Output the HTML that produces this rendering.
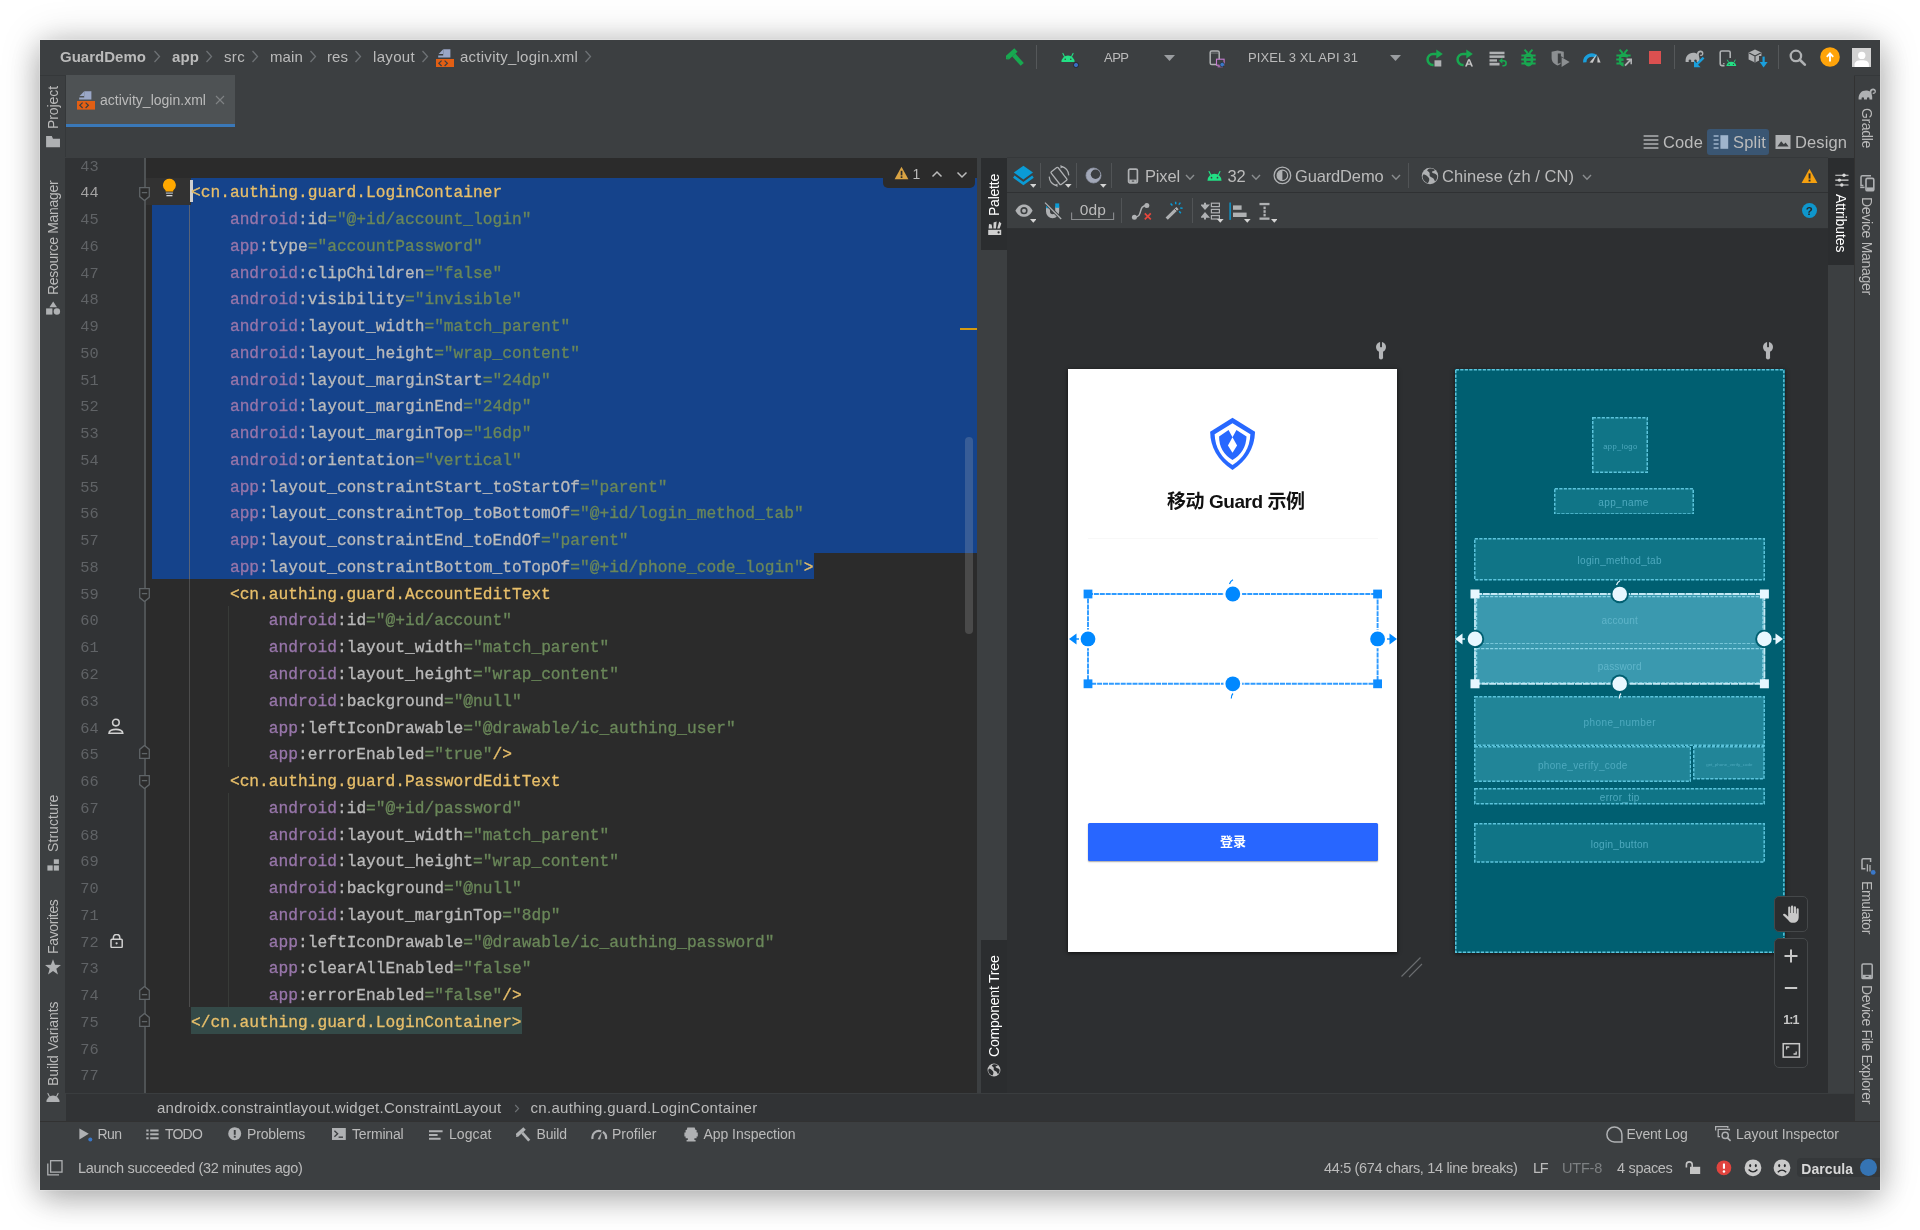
<!DOCTYPE html>
<html><head><meta charset="utf-8"><title>activity_login.xml</title>
<style>
html,body{margin:0;padding:0;}
body{width:1920px;height:1230px;position:relative;overflow:hidden;background:#ffffff;font-family:"Liberation Sans", "Noto Sans CJK SC", sans-serif;}
.r{position:absolute;display:block;}
.t{position:absolute;display:block;white-space:pre;font-family:"Liberation Sans", "Noto Sans CJK SC", sans-serif;}
.m{font-family:"Liberation Mono", "DejaVu Sans Mono", monospace;}
#all{position:absolute;left:0;top:0;width:1920px;height:1230px;will-change:transform;}
#win{position:absolute;left:40px;top:40px;width:1840px;height:1150px;background:#3c3f41;box-shadow:0 0 0 0.6px rgba(245,245,245,0.4),0 8px 30px rgba(0,0,0,0.27),0 0 38px rgba(0,0,0,0.17);}
.cl{-webkit-text-stroke:0.3px;position:absolute;left:0;white-space:pre;font-family:"Liberation Mono", "DejaVu Sans Mono", monospace;font-size:16.22px;height:27px;line-height:27px;color:#a9b7c6;}
.tg{color:#e8bf6a}.ns{color:#9876aa}.an{color:#bababa}.st{color:#6a8759}
.ln{position:absolute;left:66px;width:32.6px;text-align:right;font-family:"Liberation Mono", "DejaVu Sans Mono", monospace;font-size:15.3px;line-height:27px;height:27px;color:#606366;}
</style></head><body><div id="all">
<div id="win"></div>
<span id="t0" class="t" style="left:60.00px;top:46.40px;font-size:15.00px;line-height:21px;color:#bbbbbb;font-weight:700;letter-spacing:0.016px;">GuardDemo</span>
<span id="t1" class="t" style="left:172.00px;top:46.40px;font-size:15.00px;line-height:21px;color:#bbbbbb;font-weight:700;letter-spacing:0.109px;">app</span>
<span id="t2" class="t" style="left:224.00px;top:46.40px;font-size:15.00px;line-height:21px;color:#bbbbbb;letter-spacing:0.333px;">src</span>
<span id="t3" class="t" style="left:270.00px;top:46.40px;font-size:15.00px;line-height:21px;color:#bbbbbb;letter-spacing:0.121px;">main</span>
<span id="t4" class="t" style="left:327.00px;top:46.40px;font-size:15.00px;line-height:21px;color:#bbbbbb;letter-spacing:0.052px;">res</span>
<span id="t5" class="t" style="left:373.00px;top:46.40px;font-size:15.00px;line-height:21px;color:#bbbbbb;letter-spacing:0.328px;">layout</span>
<span id="t6" class="t" style="left:460.00px;top:46.40px;font-size:15.00px;line-height:21px;color:#bbbbbb;letter-spacing:0.257px;">activity_login.xml</span>
<svg class="r" style="left:153.00px;top:50.40px;" width="8" height="13" viewBox="0 0 8 13"><path d="M1.5 1 L6.5 6.5 L1.5 12" fill="none" stroke="#6e7275" stroke-width="1.3"/></svg>
<svg class="r" style="left:205.00px;top:50.40px;" width="8" height="13" viewBox="0 0 8 13"><path d="M1.5 1 L6.5 6.5 L1.5 12" fill="none" stroke="#6e7275" stroke-width="1.3"/></svg>
<svg class="r" style="left:251.00px;top:50.40px;" width="8" height="13" viewBox="0 0 8 13"><path d="M1.5 1 L6.5 6.5 L1.5 12" fill="none" stroke="#6e7275" stroke-width="1.3"/></svg>
<svg class="r" style="left:309.00px;top:50.40px;" width="8" height="13" viewBox="0 0 8 13"><path d="M1.5 1 L6.5 6.5 L1.5 12" fill="none" stroke="#6e7275" stroke-width="1.3"/></svg>
<svg class="r" style="left:354.00px;top:50.40px;" width="8" height="13" viewBox="0 0 8 13"><path d="M1.5 1 L6.5 6.5 L1.5 12" fill="none" stroke="#6e7275" stroke-width="1.3"/></svg>
<svg class="r" style="left:421.00px;top:50.40px;" width="8" height="13" viewBox="0 0 8 13"><path d="M1.5 1 L6.5 6.5 L1.5 12" fill="none" stroke="#6e7275" stroke-width="1.3"/></svg>
<svg class="r" style="left:584.00px;top:50.40px;" width="8" height="13" viewBox="0 0 8 13"><path d="M1.5 1 L6.5 6.5 L1.5 12" fill="none" stroke="#6e7275" stroke-width="1.3"/></svg>
<div class="r" style="left:65.60px;top:75.00px;width:169.60px;height:52.00px;background:#4e5254;"></div>
<div class="r" style="left:65.60px;top:124.20px;width:169.60px;height:2.60px;background:#3a78b8;"></div>
<span id="t7" class="t" style="left:100.00px;top:89.50px;font-size:14.00px;line-height:20px;color:#bbbbbb;letter-spacing:0.010px;">activity_login.xml</span>
<svg class="r" style="left:215.00px;top:94.50px;" width="10" height="10" viewBox="0 0 10 10"><path d="M1 1 L9 9 M9 1 L1 9" stroke="#7f8385" stroke-width="1.1" fill="none"/></svg>
<div class="r" style="left:40.00px;top:75.00px;width:26.00px;height:1046.00px;background:#3c3f41;"></div>
<div class="r" style="left:64.80px;top:75.00px;width:1.00px;height:82.00px;background:#35383a;"></div>
<div class="r" style="left:40.00px;top:74.60px;width:26.00px;height:1.00px;background:#35383a;"></div>
<span id="t8" class="t" style="font-size:14.00px;line-height:20px;color:#bbbbbb;letter-spacing:-0.083px;left:43.30px;top:129.00px;transform-origin:0 0;transform:rotate(-90deg);">Project</span>
<span id="t9" class="t" style="font-size:14.00px;line-height:20px;color:#bbbbbb;letter-spacing:-0.285px;left:43.30px;top:294.50px;transform-origin:0 0;transform:rotate(-90deg);">Resource Manager</span>
<span id="t10" class="t" style="font-size:14.00px;line-height:20px;color:#bbbbbb;letter-spacing:0.076px;left:43.30px;top:851.50px;transform-origin:0 0;transform:rotate(-90deg);">Structure</span>
<span id="t11" class="t" style="font-size:14.00px;line-height:20px;color:#bbbbbb;letter-spacing:-0.342px;left:43.30px;top:953.50px;transform-origin:0 0;transform:rotate(-90deg);">Favorites</span>
<span id="t12" class="t" style="font-size:14.00px;line-height:20px;color:#bbbbbb;letter-spacing:-0.060px;left:43.30px;top:1085.50px;transform-origin:0 0;transform:rotate(-90deg);">Build Variants</span>
<div class="r" style="left:1854.00px;top:75.00px;width:26.00px;height:1046.00px;background:#3c3f41;"></div>
<div class="r" style="left:1854.00px;top:75.00px;width:1.00px;height:1046.00px;background:#323232;"></div>
<div class="r" style="left:1854.00px;top:74.60px;width:26.00px;height:1.00px;background:#35383a;"></div>
<span id="t13" class="t" style="font-size:14.00px;line-height:20px;color:#bbbbbb;letter-spacing:-0.339px;left:1876.70px;top:108.00px;transform-origin:0 0;transform:rotate(90deg);">Gradle</span>
<span id="t14" class="t" style="font-size:14.00px;line-height:20px;color:#bbbbbb;letter-spacing:-0.281px;left:1876.70px;top:197.00px;transform-origin:0 0;transform:rotate(90deg);">Device Manager</span>
<span id="t15" class="t" style="font-size:14.00px;line-height:20px;color:#bbbbbb;letter-spacing:-0.379px;left:1876.70px;top:881.00px;transform-origin:0 0;transform:rotate(90deg);">Emulator</span>
<span id="t16" class="t" style="font-size:14.00px;line-height:20px;color:#bbbbbb;letter-spacing:-0.313px;left:1876.70px;top:985.00px;transform-origin:0 0;transform:rotate(90deg);">Device File Explorer</span>
<div class="r" style="left:1707.00px;top:128.50px;width:62.00px;height:26.50px;background:#3a5673;border-radius:3px;"></div>
<span id="t17" class="t" style="left:1663.00px;top:130.50px;font-size:16.50px;line-height:23px;color:#bbbbbb;letter-spacing:0.137px;">Code</span>
<span id="t18" class="t" style="left:1733.00px;top:130.50px;font-size:16.50px;line-height:23px;color:#bbbbbb;letter-spacing:0.178px;">Split</span>
<span id="t19" class="t" style="left:1795.00px;top:130.50px;font-size:16.50px;line-height:23px;color:#bbbbbb;letter-spacing:0.104px;">Design</span>
<div class="r" style="left:66.00px;top:157.50px;width:911.00px;height:935.50px;background:#2b2b2b;"></div>
<div class="r" style="left:65.20px;top:157.50px;width:80.80px;height:935.50px;background:#313335;"></div>
<div class="r" style="left:144.30px;top:157.50px;width:1.40px;height:935.50px;background:#4f5355;"></div>
<div class="r" style="left:0;top:157.50px;width:977px;height:935.50px;overflow:hidden;">
<div class="r" style="left:146.00px;top:20.30px;width:831.00px;height:26.76px;background:#323232;"></div>
<div class="r" style="left:191.00px;top:20.30px;width:786.00px;height:27.06px;background:#15438b;"></div>
<div class="r" style="left:152.00px;top:47.06px;width:825.00px;height:348.18px;background:#15438b;"></div>
<div class="r" style="left:152.00px;top:394.94px;width:662.00px;height:26.76px;background:#15438b;"></div>
<div class="r" style="left:191.00px;top:849.86px;width:331.00px;height:26.76px;background:#344a48;"></div>
<div class="r" style="left:189.00px;top:47.06px;width:1.20px;height:374.64px;background:#596377;"></div>
<div class="r" style="left:189.00px;top:421.70px;width:1.20px;height:428.16px;background:#4c4c4c;"></div>
<div class="r" style="left:227.80px;top:448.46px;width:1.10px;height:160.56px;background:#383b38;"></div>
<div class="r" style="left:227.80px;top:635.78px;width:1.10px;height:214.08px;background:#383b38;"></div>
<div class="r" style="left:190.40px;top:22.70px;width:2.40px;height:22.16px;background:#d0d0d0;"></div>
<div class="ln" style="top:-3.96px;left:66px;color:#606366">43</div>
<div class="ln" style="top:22.80px;left:66px;color:#a4a3a3">44</div>
<div class="cl" style="top:22.80px;left:191.00px"><span class="tg">&lt;cn.authing.guard.LoginContainer</span></div>
<div class="ln" style="top:49.56px;left:66px;color:#606366">45</div>
<div class="cl" style="top:49.56px;left:229.93px"><span class="ns">android</span><span class="an">:id</span><span class="st">=&quot;@+id/account_login&quot;</span></div>
<div class="ln" style="top:76.32px;left:66px;color:#606366">46</div>
<div class="cl" style="top:76.32px;left:229.93px"><span class="ns">app</span><span class="an">:type</span><span class="st">=&quot;accountPassword&quot;</span></div>
<div class="ln" style="top:103.08px;left:66px;color:#606366">47</div>
<div class="cl" style="top:103.08px;left:229.93px"><span class="ns">android</span><span class="an">:clipChildren</span><span class="st">=&quot;false&quot;</span></div>
<div class="ln" style="top:129.84px;left:66px;color:#606366">48</div>
<div class="cl" style="top:129.84px;left:229.93px"><span class="ns">android</span><span class="an">:visibility</span><span class="st">=&quot;invisible&quot;</span></div>
<div class="ln" style="top:156.60px;left:66px;color:#606366">49</div>
<div class="cl" style="top:156.60px;left:229.93px"><span class="ns">android</span><span class="an">:layout_width</span><span class="st">=&quot;match_parent&quot;</span></div>
<div class="ln" style="top:183.36px;left:66px;color:#606366">50</div>
<div class="cl" style="top:183.36px;left:229.93px"><span class="ns">android</span><span class="an">:layout_height</span><span class="st">=&quot;wrap_content&quot;</span></div>
<div class="ln" style="top:210.12px;left:66px;color:#606366">51</div>
<div class="cl" style="top:210.12px;left:229.93px"><span class="ns">android</span><span class="an">:layout_marginStart</span><span class="st">=&quot;24dp&quot;</span></div>
<div class="ln" style="top:236.88px;left:66px;color:#606366">52</div>
<div class="cl" style="top:236.88px;left:229.93px"><span class="ns">android</span><span class="an">:layout_marginEnd</span><span class="st">=&quot;24dp&quot;</span></div>
<div class="ln" style="top:263.64px;left:66px;color:#606366">53</div>
<div class="cl" style="top:263.64px;left:229.93px"><span class="ns">android</span><span class="an">:layout_marginTop</span><span class="st">=&quot;16dp&quot;</span></div>
<div class="ln" style="top:290.40px;left:66px;color:#606366">54</div>
<div class="cl" style="top:290.40px;left:229.93px"><span class="ns">android</span><span class="an">:orientation</span><span class="st">=&quot;vertical&quot;</span></div>
<div class="ln" style="top:317.16px;left:66px;color:#606366">55</div>
<div class="cl" style="top:317.16px;left:229.93px"><span class="ns">app</span><span class="an">:layout_constraintStart_toStartOf</span><span class="st">=&quot;parent&quot;</span></div>
<div class="ln" style="top:343.92px;left:66px;color:#606366">56</div>
<div class="cl" style="top:343.92px;left:229.93px"><span class="ns">app</span><span class="an">:layout_constraintTop_toBottomOf</span><span class="st">=&quot;@+id/login_method_tab&quot;</span></div>
<div class="ln" style="top:370.68px;left:66px;color:#606366">57</div>
<div class="cl" style="top:370.68px;left:229.93px"><span class="ns">app</span><span class="an">:layout_constraintEnd_toEndOf</span><span class="st">=&quot;parent&quot;</span></div>
<div class="ln" style="top:397.44px;left:66px;color:#606366">58</div>
<div class="cl" style="top:397.44px;left:229.93px"><span class="ns">app</span><span class="an">:layout_constraintBottom_toTopOf</span><span class="st">=&quot;@+id/phone_code_login&quot;</span><span class="tg">&gt;</span></div>
<div class="ln" style="top:424.20px;left:66px;color:#606366">59</div>
<div class="cl" style="top:424.20px;left:229.93px"><span class="tg">&lt;cn.authing.guard.AccountEditText</span></div>
<div class="ln" style="top:450.96px;left:66px;color:#606366">60</div>
<div class="cl" style="top:450.96px;left:268.87px"><span class="ns">android</span><span class="an">:id</span><span class="st">=&quot;@+id/account&quot;</span></div>
<div class="ln" style="top:477.72px;left:66px;color:#606366">61</div>
<div class="cl" style="top:477.72px;left:268.87px"><span class="ns">android</span><span class="an">:layout_width</span><span class="st">=&quot;match_parent&quot;</span></div>
<div class="ln" style="top:504.48px;left:66px;color:#606366">62</div>
<div class="cl" style="top:504.48px;left:268.87px"><span class="ns">android</span><span class="an">:layout_height</span><span class="st">=&quot;wrap_content&quot;</span></div>
<div class="ln" style="top:531.24px;left:66px;color:#606366">63</div>
<div class="cl" style="top:531.24px;left:268.87px"><span class="ns">android</span><span class="an">:background</span><span class="st">=&quot;@null&quot;</span></div>
<div class="ln" style="top:558.00px;left:66px;color:#606366">64</div>
<div class="cl" style="top:558.00px;left:268.87px"><span class="ns">app</span><span class="an">:leftIconDrawable</span><span class="st">=&quot;@drawable/ic_authing_user&quot;</span></div>
<div class="ln" style="top:584.76px;left:66px;color:#606366">65</div>
<div class="cl" style="top:584.76px;left:268.87px"><span class="ns">app</span><span class="an">:errorEnabled</span><span class="st">=&quot;true&quot;</span><span class="tg">/&gt;</span></div>
<div class="ln" style="top:611.52px;left:66px;color:#606366">66</div>
<div class="cl" style="top:611.52px;left:229.93px"><span class="tg">&lt;cn.authing.guard.PasswordEditText</span></div>
<div class="ln" style="top:638.28px;left:66px;color:#606366">67</div>
<div class="cl" style="top:638.28px;left:268.87px"><span class="ns">android</span><span class="an">:id</span><span class="st">=&quot;@+id/password&quot;</span></div>
<div class="ln" style="top:665.04px;left:66px;color:#606366">68</div>
<div class="cl" style="top:665.04px;left:268.87px"><span class="ns">android</span><span class="an">:layout_width</span><span class="st">=&quot;match_parent&quot;</span></div>
<div class="ln" style="top:691.80px;left:66px;color:#606366">69</div>
<div class="cl" style="top:691.80px;left:268.87px"><span class="ns">android</span><span class="an">:layout_height</span><span class="st">=&quot;wrap_content&quot;</span></div>
<div class="ln" style="top:718.56px;left:66px;color:#606366">70</div>
<div class="cl" style="top:718.56px;left:268.87px"><span class="ns">android</span><span class="an">:background</span><span class="st">=&quot;@null&quot;</span></div>
<div class="ln" style="top:745.32px;left:66px;color:#606366">71</div>
<div class="cl" style="top:745.32px;left:268.87px"><span class="ns">android</span><span class="an">:layout_marginTop</span><span class="st">=&quot;8dp&quot;</span></div>
<div class="ln" style="top:772.08px;left:66px;color:#606366">72</div>
<div class="cl" style="top:772.08px;left:268.87px"><span class="ns">app</span><span class="an">:leftIconDrawable</span><span class="st">=&quot;@drawable/ic_authing_password&quot;</span></div>
<div class="ln" style="top:798.84px;left:66px;color:#606366">73</div>
<div class="cl" style="top:798.84px;left:268.87px"><span class="ns">app</span><span class="an">:clearAllEnabled</span><span class="st">=&quot;false&quot;</span></div>
<div class="ln" style="top:825.60px;left:66px;color:#606366">74</div>
<div class="cl" style="top:825.60px;left:268.87px"><span class="ns">app</span><span class="an">:errorEnabled</span><span class="st">=&quot;false&quot;</span><span class="tg">/&gt;</span></div>
<div class="ln" style="top:852.36px;left:66px;color:#606366">75</div>
<div class="cl" style="top:852.36px;left:191.00px"><span class="tg">&lt;/cn.authing.guard.LoginContainer&gt;</span></div>
<div class="ln" style="top:879.12px;left:66px;color:#606366">76</div>
<div class="ln" style="top:905.88px;left:66px;color:#606366">77</div>
</div>
<div class="r" style="left:883.00px;top:157.50px;width:91.50px;height:30.00px;background:#2b2b2b;border-radius:0 0 5px 5px;"></div>
<svg class="r" style="left:894.00px;top:166.00px;" width="15" height="14" viewBox="0 0 15 14"><path d="M7.5 0.8 L14.4 13.2 L0.6 13.2 Z" fill="#d9a343"/><rect x="6.7" y="4.8" width="1.7" height="4.6" fill="#2b2b2b"/><rect x="6.7" y="10.3" width="1.7" height="1.7" fill="#2b2b2b"/></svg>
<span id="t20" class="t" style="left:912.50px;top:164.20px;font-size:14.00px;line-height:20px;color:#bbbbbb;">1</span>
<svg class="r" style="left:931.00px;top:169.50px;" width="12" height="8" viewBox="0 0 12 8"><path d="M1.5 6.5 L6 2 L10.5 6.5" fill="none" stroke="#bbbbbb" stroke-width="1.5"/></svg>
<svg class="r" style="left:956.00px;top:170.50px;" width="12" height="8" viewBox="0 0 12 8"><path d="M1.5 1.5 L6 6 L10.5 1.5" fill="none" stroke="#bbbbbb" stroke-width="1.5"/></svg>
<div class="r" style="left:964.90px;top:437.40px;width:8.20px;height:196.80px;background:rgba(200,200,200,0.2);border-radius:4.1px;"></div>
<div class="r" style="left:960.00px;top:328.30px;width:17.00px;height:2.00px;background:#d39a13;"></div>
<div class="r" style="left:977.00px;top:157.50px;width:4.00px;height:935.50px;background:#3c3f41;"></div>
<div class="r" style="left:981.00px;top:157.50px;width:25.50px;height:935.50px;background:#3c3f41;"></div>
<div class="r" style="left:981.00px;top:157.50px;width:25.50px;height:92.00px;background:#2b2d2f;"></div>
<div class="r" style="left:981.00px;top:940.00px;width:25.50px;height:153.00px;background:#2b2d2f;"></div>
<span id="t21" class="t" style="font-size:14.00px;line-height:20px;color:#ffffff;letter-spacing:-0.228px;left:984.30px;top:215.50px;transform-origin:0 0;transform:rotate(-90deg);">Palette</span>
<span id="t22" class="t" style="font-size:14.00px;line-height:20px;color:#ffffff;letter-spacing:-0.200px;left:984.30px;top:1056.50px;transform-origin:0 0;transform:rotate(-90deg);">Component Tree</span>
<div class="r" style="left:1006.50px;top:157.50px;width:821.50px;height:35.00px;background:#3c3f41;"></div>
<div class="r" style="left:1006.50px;top:192.00px;width:821.50px;height:1.30px;background:#2f3133;"></div>
<div class="r" style="left:1006.50px;top:157.00px;width:821.50px;height:1.00px;background:#35383a;"></div>
<div class="r" style="left:1006.50px;top:193.30px;width:821.50px;height:35.00px;background:#3c3f41;"></div>
<div class="r" style="left:1006.50px;top:228.00px;width:821.50px;height:1.00px;background:#2f3133;"></div>
<span id="t23" class="t" style="left:1145.00px;top:164.50px;font-size:16.50px;line-height:23px;color:#bbbbbb;letter-spacing:-0.153px;">Pixel</span>
<span id="t24" class="t" style="left:1227.50px;top:164.50px;font-size:16.50px;line-height:23px;color:#bbbbbb;letter-spacing:-0.180px;">32</span>
<span id="t25" class="t" style="left:1295.00px;top:164.50px;font-size:16.50px;line-height:23px;color:#bbbbbb;letter-spacing:-0.153px;">GuardDemo</span>
<span id="t26" class="t" style="left:1442.00px;top:164.50px;font-size:16.50px;line-height:23px;color:#bbbbbb;letter-spacing:0.051px;">Chinese (zh / CN)</span>
<svg class="r" style="left:1185.00px;top:173.50px;" width="10" height="7" viewBox="0 0 10 7"><path d="M1 1 L5 5.3 L9 1" fill="none" stroke="#8a8d8f" stroke-width="1.4"/></svg>
<svg class="r" style="left:1251.00px;top:173.50px;" width="10" height="7" viewBox="0 0 10 7"><path d="M1 1 L5 5.3 L9 1" fill="none" stroke="#8a8d8f" stroke-width="1.4"/></svg>
<svg class="r" style="left:1391.00px;top:173.50px;" width="10" height="7" viewBox="0 0 10 7"><path d="M1 1 L5 5.3 L9 1" fill="none" stroke="#8a8d8f" stroke-width="1.4"/></svg>
<svg class="r" style="left:1581.50px;top:173.50px;" width="10" height="7" viewBox="0 0 10 7"><path d="M1 1 L5 5.3 L9 1" fill="none" stroke="#8a8d8f" stroke-width="1.4"/></svg>
<div class="r" style="left:1040.30px;top:163.00px;width:1.00px;height:25.00px;background:#515456;"></div>
<div class="r" style="left:1075.50px;top:163.00px;width:1.00px;height:25.00px;background:#515456;"></div>
<div class="r" style="left:1111.20px;top:163.00px;width:1.00px;height:25.00px;background:#515456;"></div>
<div class="r" style="left:1407.80px;top:163.00px;width:1.00px;height:25.00px;background:#515456;"></div>
<span id="t27" class="t" style="left:1079.70px;top:198.70px;font-size:15.50px;line-height:22px;color:#bbbbbb;letter-spacing:0.208px;">0dp</span>
<svg class="r" style="left:1071.00px;top:212.00px;" width="44" height="9" viewBox="0 0 44 9"><path d="M0.6 0.5 V7.5 H42.6 V0.5" fill="none" stroke="#8a8d8f" stroke-width="1.1"/></svg>
<div class="r" style="left:1120.80px;top:198.00px;width:1.00px;height:25.00px;background:#515456;"></div>
<div class="r" style="left:1192.30px;top:198.00px;width:1.00px;height:25.00px;background:#515456;"></div>
<div class="r" style="left:1006.50px;top:229.00px;width:821.50px;height:864.00px;background:#2d2f31;"></div>
<div class="r" style="left:1828.00px;top:157.50px;width:26.00px;height:935.50px;background:#3c3f41;"></div>
<div class="r" style="left:1828.00px;top:157.50px;width:26.00px;height:107.50px;background:#2b2d2f;"></div>
<span id="t28" class="t" style="font-size:14.00px;line-height:20px;color:#ffffff;letter-spacing:-0.064px;left:1851.00px;top:194.00px;transform-origin:0 0;transform:rotate(90deg);">Attributes</span>
<div class="r" style="left:1068.00px;top:368.50px;width:329.00px;height:583.50px;background:#ffffff;box-shadow:0 1px 4px rgba(0,0,0,0.7);"></div>
<span id="t29" class="t" style="left:1167.00px;top:488.10px;font-size:19.00px;line-height:27px;color:#111111;font-weight:700;letter-spacing:-0.456px;">移动 Guard 示例</span>
<div class="r" style="left:1088.00px;top:538.30px;width:290.00px;height:1.00px;background:#f8f8f8;"></div>
<div class="r" style="left:1087.50px;top:823.00px;width:290.00px;height:38.30px;background:#2866ff;border-radius:1.5px;box-shadow:0 1px 1.5px rgba(0,0,0,0.35);"></div>
<span id="t30" class="t" style="left:1220.00px;top:833.00px;font-size:13.00px;line-height:18px;color:#ffffff;font-weight:700;letter-spacing:-0.008px;">登录</span>
<div class="r" style="left:1455.00px;top:368.50px;width:329.60px;height:584.10px;background:#005f71;box-shadow:0 1px 4px rgba(0,0,0,0.6);"></div>
<svg class="r" style="left:1455.00px;top:368.50px;" width="329.6" height="584.1" viewBox="0 0 329.6 584.1"><rect x="0.75" y="0.75" width="328.1" height="582.6" fill="none" stroke="#5cc4dc" stroke-width="1.5" stroke-dasharray="3.2 1.3"/></svg>
<svg class="r" style="left:1592.40px;top:417.00px;" width="56" height="56" viewBox="0 0 56 56"><rect x="0.75" y="0.75" width="54.5" height="54.5" fill="#107587" stroke="#5cc4dc" stroke-width="1.5" stroke-dasharray="3.2 1.3"/></svg>
<span id="t31" class="t" style="left:1603.15px;top:440.70px;font-size:7.60px;line-height:12px;color:#4eaabf;letter-spacing:0.404px;">app_logo</span>
<svg class="r" style="left:1553.50px;top:487.60px;" width="140" height="26.8" viewBox="0 0 140 26.8"><rect x="0.75" y="0.75" width="138.5" height="25.3" fill="#107587" stroke="#5cc4dc" stroke-width="1.5" stroke-dasharray="3.2 1.3"/></svg>
<span id="t32" class="t" style="left:1598.20px;top:496.70px;font-size:10.00px;line-height:12px;color:#4eaabf;letter-spacing:0.417px;">app_name</span>
<svg class="r" style="left:1474.20px;top:538.20px;" width="291" height="42.6" viewBox="0 0 291 42.6"><rect x="0.75" y="0.75" width="289.5" height="41.1" fill="#107587" stroke="#5cc4dc" stroke-width="1.5" stroke-dasharray="3.2 1.3"/></svg>
<span id="t33" class="t" style="left:1577.55px;top:555.20px;font-size:10.00px;line-height:12px;color:#4eaabf;letter-spacing:0.299px;">login_method_tab</span>
<div class="r" style="left:1474.20px;top:594.00px;width:291.00px;height:89.80px;background:#3a99af;"></div>
<svg class="r" style="left:1476.00px;top:595.50px;" width="287.5" height="48.5" viewBox="0 0 287.5 48.5"><rect x="0.6" y="0.6" width="286.3" height="47.3" fill="#3a99af" stroke="#8ad4e6" stroke-width="1.2" stroke-dasharray="3.2 1.3"/></svg>
<span id="t34" class="t" style="left:1601.45px;top:615.45px;font-size:10.00px;line-height:12px;color:#5fb5ca;letter-spacing:0.224px;">account</span>
<svg class="r" style="left:1476.00px;top:647.60px;" width="287.5" height="35.4" viewBox="0 0 287.5 35.4"><rect x="0.6" y="0.6" width="286.3" height="34.2" fill="#3a99af" stroke="#8ad4e6" stroke-width="1.2" stroke-dasharray="3.2 1.3"/></svg>
<span id="t35" class="t" style="left:1597.80px;top:661.00px;font-size:10.00px;line-height:12px;color:#5fb5ca;letter-spacing:0.136px;">password</span>
<svg class="r" style="left:1474.20px;top:696.00px;" width="291" height="50" viewBox="0 0 291 50"><rect x="0.75" y="0.75" width="289.5" height="48.5" fill="#218598" stroke="#5cc4dc" stroke-width="1.5" stroke-dasharray="3.2 1.3"/></svg>
<span id="t36" class="t" style="left:1583.40px;top:716.70px;font-size:10.00px;line-height:12px;color:#4eaabf;letter-spacing:0.443px;">phone_number</span>
<svg class="r" style="left:1474.20px;top:746.00px;" width="217.3" height="36" viewBox="0 0 217.3 36"><rect x="0.75" y="0.75" width="215.8" height="34.5" fill="#218598" stroke="#5cc4dc" stroke-width="1.5" stroke-dasharray="3.2 1.3"/></svg>
<span id="t37" class="t" style="left:1537.95px;top:759.70px;font-size:10.00px;line-height:12px;color:#4eaabf;letter-spacing:0.311px;">phone_verify_code</span>
<svg class="r" style="left:1693.40px;top:746.00px;" width="71.8" height="33.6" viewBox="0 0 71.8 33.6"><rect x="0.75" y="0.75" width="70.3" height="32.1" fill="#218598" stroke="#5cc4dc" stroke-width="1.5" stroke-dasharray="3.2 1.3"/></svg>
<span id="t38" class="t" style="left:1706.20px;top:758.50px;font-size:4.40px;line-height:12px;color:#4eaabf;letter-spacing:0.026px;">get_phone_verify_code</span>
<svg class="r" style="left:1474.20px;top:788.20px;" width="291" height="16.6" viewBox="0 0 291 16.6"><rect x="0.75" y="0.75" width="289.5" height="15.1" fill="#107587" stroke="#5cc4dc" stroke-width="1.5" stroke-dasharray="3.2 1.3"/></svg>
<span id="t39" class="t" style="left:1599.80px;top:792.20px;font-size:10.00px;line-height:12px;color:#4eaabf;letter-spacing:0.283px;">error_tip</span>
<svg class="r" style="left:1474.20px;top:823.30px;" width="291" height="39.7" viewBox="0 0 291 39.7"><rect x="0.75" y="0.75" width="289.5" height="38.2" fill="#107587" stroke="#5cc4dc" stroke-width="1.5" stroke-dasharray="3.2 1.3"/></svg>
<span id="t40" class="t" style="left:1590.75px;top:838.85px;font-size:10.00px;line-height:12px;color:#4eaabf;letter-spacing:0.283px;">login_button</span>
<svg class="r" style="left:1074.00px;top:580.00px;" width="317.6" height="117.8" viewBox="0 0 317.6 117.8"><rect x="14" y="14" width="289.6" height="89.8" fill="none" stroke="#2f9bff" stroke-width="1.9" stroke-dasharray="5 0.9"/><rect x="9.6" y="9.6" width="8.8" height="8.8" fill="#0d8cff"/><rect x="299.2" y="9.6" width="8.8" height="8.8" fill="#0d8cff"/><rect x="9.6" y="99.4" width="8.8" height="8.8" fill="#0d8cff"/><rect x="299.2" y="99.4" width="8.8" height="8.8" fill="#0d8cff"/><circle cx="158.8" cy="14" r="9.4" fill="#ffffff"/><circle cx="158.8" cy="14" r="7.4" fill="#0088ff"/><circle cx="158.8" cy="103.8" r="9.4" fill="#ffffff"/><circle cx="158.8" cy="103.8" r="7.4" fill="#0088ff"/><circle cx="14" cy="58.9" r="9.4" fill="#ffffff"/><circle cx="14" cy="58.9" r="7.4" fill="#0088ff"/><circle cx="303.6" cy="58.9" r="9.4" fill="#ffffff"/><circle cx="303.6" cy="58.9" r="7.4" fill="#0088ff"/></svg>
<svg class="r" style="left:1066.50px;top:632.00px;" width="12" height="14" viewBox="0 0 12 14"><path d="M9.5 1.5 L2 7 L9.5 12.5 Z" fill="#0088ff"/><rect x="9" y="6.3" width="3" height="1.4" fill="#0088ff"/></svg>
<svg class="r" style="left:1387.30px;top:632.00px;" width="12" height="14" viewBox="0 0 12 14"><path d="M2.5 1.5 L10 7 L2.5 12.5 Z" fill="#0088ff"/><rect x="0" y="6.3" width="3" height="1.4" fill="#0088ff"/></svg>
<svg class="r" style="left:1228.00px;top:579.00px;" width="8" height="6" viewBox="0 0 8 6"><path d="M1.5 5 Q2.5 2 5 0.8" fill="none" stroke="#0088ff" stroke-width="1.2"/></svg>
<svg class="r" style="left:1228.00px;top:692.50px;" width="8" height="6" viewBox="0 0 8 6"><path d="M5 0.5 Q3 2.5 3.3 5.5" fill="none" stroke="#0088ff" stroke-width="1.2"/></svg>
<svg class="r" style="left:1461.00px;top:580.00px;" width="317.4" height="117.8" viewBox="0 0 317.4 117.8"><rect x="14" y="14" width="289.4" height="89.8" fill="none" stroke="#c4e9f5" stroke-width="1.8" stroke-dasharray="7 0.8"/><rect x="9.5" y="9.5" width="9" height="9" fill="#e8f7ff"/><rect x="298.9" y="9.5" width="9" height="9" fill="#e8f7ff"/><rect x="9.5" y="99.3" width="9" height="9" fill="#e8f7ff"/><rect x="298.9" y="99.3" width="9" height="9" fill="#e8f7ff"/><circle cx="158.7" cy="14" r="9.2" fill="#005f71"/><circle cx="158.7" cy="14" r="7.3" fill="#e8f7ff"/><circle cx="158.7" cy="103.8" r="9.2" fill="#005f71"/><circle cx="158.7" cy="103.8" r="7.3" fill="#e8f7ff"/><circle cx="14" cy="58.9" r="9.2" fill="#005f71"/><circle cx="14" cy="58.9" r="7.3" fill="#e8f7ff"/><circle cx="303.4" cy="58.9" r="9.2" fill="#005f71"/><circle cx="303.4" cy="58.9" r="7.3" fill="#e8f7ff"/></svg>
<svg class="r" style="left:1453.30px;top:632.00px;" width="12" height="14" viewBox="0 0 12 14"><path d="M9.5 1.5 L2 7 L9.5 12.5 Z" fill="#e8f7ff"/><rect x="9" y="6.3" width="3" height="1.4" fill="#e8f7ff"/></svg>
<svg class="r" style="left:1772.50px;top:632.00px;" width="12" height="14" viewBox="0 0 12 14"><path d="M2.5 1.5 L10 7 L2.5 12.5 Z" fill="#e8f7ff"/><rect x="0" y="6.3" width="3" height="1.4" fill="#e8f7ff"/></svg>
<svg class="r" style="left:1615.00px;top:580.00px;" width="8" height="6" viewBox="0 0 8 6"><path d="M1.5 5 Q2.5 2 5 0.8" fill="none" stroke="#e8f7ff" stroke-width="1.2"/></svg>
<svg class="r" style="left:1616.00px;top:693.00px;" width="8" height="6" viewBox="0 0 8 6"><path d="M5 0.5 Q3 2.5 3.3 5.5" fill="none" stroke="#e8f7ff" stroke-width="1.2"/></svg>
<svg class="r" style="left:1374.85px;top:341.60px;" width="12" height="18.5" viewBox="0 0 12 18.5"><circle cx="6" cy="5.1" r="5" fill="#b4b6b8"/><rect x="3.95" y="5" width="4.1" height="10.4" fill="#b4b6b8"/><circle cx="6" cy="15.4" r="2.05" fill="#b4b6b8"/><rect x="5.1" y="-1" width="1.85" height="6.2" fill="#2d2f31"/></svg>
<svg class="r" style="left:1762.00px;top:341.60px;" width="12" height="18.5" viewBox="0 0 12 18.5"><circle cx="6" cy="5.1" r="5" fill="#b4b6b8"/><rect x="3.95" y="5" width="4.1" height="10.4" fill="#b4b6b8"/><circle cx="6" cy="15.4" r="2.05" fill="#b4b6b8"/><rect x="5.1" y="-1" width="1.85" height="6.2" fill="#2d2f31"/></svg>
<svg class="r" style="left:1400.00px;top:955.00px;" width="24" height="24" viewBox="0 0 24 24"><path d="M1.5 21.5 L20.5 2.5 M9 22 L22 9" stroke="#6b6e70" stroke-width="1.1" fill="none"/></svg>
<div class="r" style="left:1774.30px;top:896.30px;width:33.40px;height:36.20px;background:#2b2d2f;box-sizing:border-box;border:1px solid #45484a;border-radius:5px;"></div>
<div class="r" style="left:1774.30px;top:938.30px;width:33.40px;height:130.20px;background:#2b2d2f;box-sizing:border-box;border:1px solid #45484a;border-radius:5px;"></div>
<svg class="r" style="left:1782.00px;top:947.00px;" width="18" height="18" viewBox="0 0 18 18"><path d="M9 2.5 V15.5 M2.5 9 H15.5" stroke="#c8c8c8" stroke-width="2" fill="none"/></svg>
<svg class="r" style="left:1782.00px;top:978.50px;" width="18" height="18" viewBox="0 0 18 18"><path d="M2.8 9 H15.2" stroke="#c8c8c8" stroke-width="2" fill="none"/></svg>
<span id="t41" class="t" style="left:1783.20px;top:1010.50px;font-size:12.50px;line-height:18px;color:#c8c8c8;font-weight:700;letter-spacing:-0.859px;">1:1</span>
<svg class="r" style="left:1781.50px;top:1042.00px;" width="19" height="17" viewBox="0 0 19 17"><rect x="1.2" y="1.7" width="16.2" height="13.4" fill="none" stroke="#c8c8c8" stroke-width="1.5"/><path d="M4.6 7.5 V5 H7.3 M11.5 12 H14.2 V9.5" fill="none" stroke="#c8c8c8" stroke-width="1.3"/></svg>
<svg class="r" style="left:1781.00px;top:904.00px;" width="20" height="20" viewBox="0 0 20 20"><path d="M7.2 10.2 V3.6 a1.1 1.1 0 0 1 2.2 0 V9 h0.6 V2.6 a1.1 1.1 0 0 1 2.2 0 V9 h0.6 V3.4 a1.1 1.1 0 0 1 2.2 0 V9.6 h0.6 V5.4 a1.05 1.05 0 0 1 2.1 0 V13 c0 3.6 -2.2 5.8 -5.4 5.8 c-2.6 0 -3.9 -1 -5.2 -2.9 L2.2 11.2 c-0.5 -0.8 0.3 -1.8 1.3 -1.4 c1.2 0.5 2.3 1.5 3.7 2.9 Z" fill="#c8c8c8"/></svg>
<div class="r" style="left:66.00px;top:1093.00px;width:1788.00px;height:28.00px;background:#313335;"></div>
<div class="r" style="left:66.00px;top:1093.00px;width:1788.00px;height:0.80px;background:#3a3d3f;"></div>
<span id="t42" class="t" style="left:157.00px;top:1096.90px;font-size:15.00px;line-height:21px;color:#bbbbbb;letter-spacing:0.258px;">androidx.constraintlayout.widget.ConstraintLayout</span>
<span id="t43" class="t" style="left:530.50px;top:1096.90px;font-size:15.00px;line-height:21px;color:#bbbbbb;letter-spacing:0.301px;">cn.authing.guard.LoginContainer</span>
<svg class="r" style="left:514.00px;top:1103.50px;" width="6" height="9" viewBox="0 0 6 9"><path d="M1.2 1 L4.6 4.5 L1.2 8" fill="none" stroke="#6e7275" stroke-width="1.1"/></svg>
<div class="r" style="left:40.00px;top:1121.00px;width:1840.00px;height:27.50px;background:#3c3f41;"></div>
<div class="r" style="left:40.00px;top:1120.50px;width:1840.00px;height:1.00px;background:#323232;"></div>
<span id="t44" class="t" style="left:97.50px;top:1124.00px;font-size:14.00px;line-height:20px;color:#bbbbbb;letter-spacing:-0.562px;">Run</span>
<span id="t45" class="t" style="left:165.00px;top:1124.00px;font-size:14.00px;line-height:20px;color:#bbbbbb;letter-spacing:-0.801px;">TODO</span>
<span id="t46" class="t" style="left:247.00px;top:1124.00px;font-size:14.00px;line-height:20px;color:#bbbbbb;letter-spacing:-0.143px;">Problems</span>
<span id="t47" class="t" style="left:352.00px;top:1124.00px;font-size:14.00px;line-height:20px;color:#bbbbbb;letter-spacing:-0.176px;">Terminal</span>
<span id="t48" class="t" style="left:449.00px;top:1124.00px;font-size:14.00px;line-height:20px;color:#bbbbbb;letter-spacing:0.076px;">Logcat</span>
<span id="t49" class="t" style="left:536.50px;top:1124.00px;font-size:14.00px;line-height:20px;color:#bbbbbb;letter-spacing:-0.128px;">Build</span>
<span id="t50" class="t" style="left:612.00px;top:1124.00px;font-size:14.00px;line-height:20px;color:#bbbbbb;letter-spacing:0.018px;">Profiler</span>
<span id="t51" class="t" style="left:703.50px;top:1124.00px;font-size:14.00px;line-height:20px;color:#bbbbbb;letter-spacing:-0.045px;">App Inspection</span>
<span id="t52" class="t" style="left:1626.50px;top:1124.00px;font-size:14.00px;line-height:20px;color:#bbbbbb;letter-spacing:-0.229px;">Event Log</span>
<span id="t53" class="t" style="left:1736.00px;top:1124.00px;font-size:14.00px;line-height:20px;color:#bbbbbb;letter-spacing:-0.032px;">Layout Inspector</span>
<span id="t54" class="t" style="left:78.00px;top:1157.70px;font-size:14.50px;line-height:20px;color:#bbbbbb;letter-spacing:-0.305px;">Launch succeeded (32 minutes ago)</span>
<span id="t55" class="t" style="left:1324.00px;top:1157.70px;font-size:14.50px;line-height:20px;color:#bbbbbb;letter-spacing:-0.326px;">44:5 (674 chars, 14 line breaks)</span>
<span id="t56" class="t" style="left:1533.00px;top:1157.70px;font-size:14.50px;line-height:20px;color:#bbbbbb;letter-spacing:-1.211px;">LF</span>
<span id="t57" class="t" style="left:1562.00px;top:1157.70px;font-size:14.50px;line-height:20px;color:#7d8082;letter-spacing:-0.219px;">UTF-8</span>
<span id="t58" class="t" style="left:1617.00px;top:1157.70px;font-size:14.50px;line-height:20px;color:#bbbbbb;letter-spacing:-0.318px;">4 spaces</span>
<div class="r" style="left:1797.20px;top:1158.00px;width:82.60px;height:19.30px;background:#35383a;border-radius:4px 0 0 4px;"></div>
<span id="t59" class="t" style="left:1801.20px;top:1158.60px;font-size:14.00px;line-height:20px;color:#d8d8d8;font-weight:700;letter-spacing:0.092px;">Darcula</span>
<div class="r" style="left:1860.3px;top:1159.3px;width:16.8px;height:16.8px;border-radius:50%;background:#3574b4;"></div>
<svg class="r" style="left:1006.00px;top:47.20px;" width="21" height="20" viewBox="0 0 21 20"><g transform="rotate(-42 10 10)"><rect x="3" y="2.4" width="11.6" height="4.8" fill="#18a850"/><path d="M3 2.4 L0.8 4.8 L3 7.2 Z" fill="#18a850"/><rect x="7.6" y="7" width="4.2" height="12.6" fill="#18a850"/></g></svg>
<div class="r" style="left:1035.50px;top:45.00px;width:1.00px;height:24.00px;background:#55585a;"></div>
<svg class="r" style="left:1061.00px;top:52.00px;" width="14" height="10.36" viewBox="0 0 14 10.4"><path d="M0.4 10 A6.6 6.4 0 0 1 13.6 10 Z" fill="#22e084"/><path d="M3.4 4.4 L1.9 1.4 M10.6 4.4 L12.1 1.4" stroke="#22e084" stroke-width="1.1" stroke-linecap="round"/><circle cx="4.2" cy="7.2" r="0.8" fill="#3c3f41"/><circle cx="9.8" cy="7.2" r="0.8" fill="#3c3f41"/></svg>
<div class="r" style="left:1073.2px;top:62px;width:5.6px;height:5.6px;border-radius:50%;background:#3a6fc4;border:1px solid #26282a;box-sizing:border-box;"></div>
<span id="t60" class="t" style="left:1104.00px;top:48.60px;font-size:13.00px;line-height:18px;color:#bbbbbb;letter-spacing:-0.505px;">APP</span>
<svg class="r" style="left:1163.80px;top:55.00px;" width="11" height="6" viewBox="0 0 11 6"><path d="M0 0 H11 L5.5 6 Z" fill="#9a9da0"/></svg>
<svg class="r" style="left:1208.50px;top:49.50px;" width="17" height="18.5" viewBox="0 0 17 18.5"><rect x="1.2" y="0.9" width="9" height="13.6" rx="1.6" fill="none" stroke="#afb1b3" stroke-width="1.5"/><rect x="1.9" y="2.6" width="7.6" height="0.9" fill="#afb1b3" opacity="0.6"/><rect x="7.5" y="9.2" width="7.6" height="6" fill="#3c3f41" stroke="#c77dd1" stroke-width="1.1"/><rect x="8.6" y="16.3" width="5.4" height="1" fill="#c77dd1"/><circle cx="13.2" cy="14.6" r="2.3" fill="#3a78c9" stroke="#26282a" stroke-width="0.7"/></svg>
<span id="t61" class="t" style="left:1248.00px;top:48.60px;font-size:13.00px;line-height:18px;color:#bbbbbb;letter-spacing:0.108px;">PIXEL 3 XL API 31</span>
<svg class="r" style="left:1390.00px;top:55.00px;" width="11" height="6" viewBox="0 0 11 6"><path d="M0 0 H11 L5.5 6 Z" fill="#9a9da0"/></svg>
<svg class="r" style="left:1424.50px;top:48.50px;" width="19" height="18.5" viewBox="0 0 19 18.5"><path d="M11.8 5.1 H8 A5.45 5.45 0 0 0 8 16 H8.6" fill="none" stroke="#18a850" stroke-width="2.5"/><path d="M11.3 0.5 L17.8 4.95 L11.3 9.4 Z" fill="#18a850"/><rect x="9.5" y="11.3" width="6.8" height="6.2" fill="#afb1b3"/></svg>
<svg class="r" style="left:1454.60px;top:48.50px;" width="19" height="18.5" viewBox="0 0 19 18.5"><path d="M11.8 5.1 H8 A5.45 5.45 0 0 0 8 16 H8.6" fill="none" stroke="#18a850" stroke-width="2.5"/><path d="M11.3 0.5 L17.8 4.95 L11.3 9.4 Z" fill="#18a850"/><path d="M10 17.4 L13.1 10.2 H14.9 L18 17.4 H16.1 L15.5 15.8 H12.5 L11.9 17.4 Z M13 14.4 H15 L14 11.8 Z" fill="#c4c4c4"/></svg>
<svg class="r" style="left:1488.50px;top:50.50px;" width="19" height="16" viewBox="0 0 19 16"><rect x="0.5" y="0.7" width="15" height="2.5" fill="#afb1b3"/><rect x="0.5" y="4.4" width="15" height="2.5" fill="#afb1b3"/><rect x="0.5" y="8.3" width="7.5" height="2.3" fill="#afb1b3"/><rect x="0.5" y="11.8" width="10" height="2.7" fill="#afb1b3"/><path d="M12.4 9.8 H14.6 A2.5 2.5 0 0 1 14.6 14.8 H13.4" fill="none" stroke="#18a850" stroke-width="1.6"/><path d="M13.4 6.8 L10 9.8 L13.4 12.8 Z" fill="#18a850"/></svg>
<svg class="r" style="left:1519.50px;top:48.50px;" width="17" height="18.5" viewBox="0 0 17 18.5"><ellipse cx="8.5" cy="10.6" rx="4.9" ry="6.9" fill="#18a850"/><path d="M4.5 0.7 L7.6 4 M12.5 0.7 L9.4 4" stroke="#18a850" stroke-width="1.9" fill="none"/><path d="M1.4 6.4 H15.6 M1.2 10.5 H15.8 M1.4 14.6 H15.6" stroke="#18a850" stroke-width="2" fill="none"/><rect x="6.4" y="8" width="4.2" height="1.4" fill="#3c3f41"/><rect x="6.4" y="11.9" width="4.2" height="1.5" fill="#3c3f41"/></svg>
<svg class="r" style="left:1550.50px;top:49.50px;" width="19.5" height="18.5" viewBox="0 0 19.5 18.5"><path d="M0.6 1.8 L6.6 0.6 L12.8 1.8 V8 C12.8 11.8 10 14.2 6.6 15.6 C3.2 14.2 0.6 11.8 0.6 8 Z" fill="#8c8f91"/><path d="M6.8 3.6 H9.9 V12.4 C9 13 8 13.4 6.8 13.8 Z" fill="#3c3f41"/><path d="M9.6 6 L19.4 12 L9.6 18.2 Z" fill="#3c3f41"/><path d="M10.6 7.2 L18.6 12 L10.6 17 Z" fill="#8c8f91"/></svg>
<svg class="r" style="left:1581.50px;top:50.50px;" width="19.5" height="12.5" viewBox="0 0 19.5 12.5"><path d="M2.8 11.4 A7 7 0 0 1 14.2 5.6" fill="none" stroke="#1a9fdc" stroke-width="3.4"/><path d="M15.6 4.4 L18.6 11.6 H15.4 Z" fill="#c8c8c8"/><path d="M7.6 11.6 L14.8 2.9 L10.8 11.8 Z" fill="#c8c8c8"/></svg>
<svg class="r" style="left:1614.50px;top:48.50px;" width="17" height="18.5" viewBox="0 0 17 18.5"><ellipse cx="8.5" cy="10.6" rx="4.9" ry="6.9" fill="#18a850"/><path d="M4.5 0.7 L7.6 4 M12.5 0.7 L9.4 4" stroke="#18a850" stroke-width="1.9" fill="none"/><path d="M1.4 6.4 H15.6 M1.2 10.5 H15.8 M1.4 14.6 H15.6" stroke="#18a850" stroke-width="2" fill="none"/><rect x="6.4" y="8" width="4.2" height="1.4" fill="#3c3f41"/><rect x="6.4" y="11.9" width="4.2" height="1.5" fill="#3c3f41"/><rect x="8.6" y="8.4" width="9" height="9" fill="#3c3f41"/><path d="M10 16.6 L15.4 11.2 M11.6 10.4 H16.4 V15.2" fill="none" stroke="#afb1b3" stroke-width="1.9"/></svg>
<div class="r" style="left:1648.50px;top:51.00px;width:12.60px;height:12.60px;background:#db5050;"></div>
<div class="r" style="left:1674.20px;top:45.00px;width:1.00px;height:24.00px;background:#55585a;"></div>
<svg class="r" style="left:1685.00px;top:50.00px;" width="19.5" height="15.6" viewBox="0 0 19 15.2"><path d="M0.6 11.6 C0.2 6 3.4 2.6 8 2.6 C9.6 2.6 10.6 3 11.6 3.6 C12 1.6 13.6 0.4 15.4 0.6 C17.6 0.8 18.6 3 17.6 4.8 C16.8 6 15.2 6.2 14.4 5.4 L15.2 4.4 C15.8 4.8 16.4 4.6 16.6 4 C16.8 3 16 2.2 15.2 2.2 C14 2.2 13.4 3.4 13.4 4.6 C13.6 6.6 14.2 7.6 14.2 9 V11.6 H11.4 V9.8 C10.8 9 9.6 9 9 9.8 V11.6 H6 V9.8 C5.4 9 4.2 9 3.6 9.8 V11.6 Z" fill="#afb1b3"/></svg>
<svg class="r" style="left:1693.00px;top:56.00px;" width="12.5" height="12" viewBox="0 0 12.5 12"><rect x="0" y="0" width="12.5" height="12" fill="none"/><path d="M10.6 1.6 L3 9.2" stroke="#1a9fdc" stroke-width="2.4" fill="none"/><path d="M1 4.6 V11.2 H7.6 Z" fill="#1a9fdc"/></svg>
<svg class="r" style="left:1719.00px;top:49.50px;" width="18" height="18" viewBox="0 0 18 18"><rect x="1.2" y="1" width="10" height="14.6" rx="1.6" fill="none" stroke="#afb1b3" stroke-width="1.6"/><rect x="4.2" y="13" width="4" height="1.2" fill="#afb1b3"/><rect x="5.5" y="8" width="12.5" height="10" fill="#3c3f41"/></svg>
<svg class="r" style="left:1726.40px;top:58.60px;" width="10.6" height="7.844" viewBox="0 0 14 10.4"><path d="M0.4 10 A6.6 6.4 0 0 1 13.6 10 Z" fill="#22e084"/><path d="M3.4 4.4 L1.9 1.4 M10.6 4.4 L12.1 1.4" stroke="#22e084" stroke-width="1.1" stroke-linecap="round"/><circle cx="4.2" cy="7.2" r="0.8" fill="#3c3f41"/><circle cx="9.8" cy="7.2" r="0.8" fill="#3c3f41"/></svg>
<svg class="r" style="left:1748.00px;top:48.50px;" width="20" height="19" viewBox="0 0 20 19"><path d="M7 0.6 L13.4 3.6 V10.4 L7 13.6 L0.6 10.4 V3.6 Z" fill="#afb1b3"/><path d="M7 7 V13 M7 7 L1.2 4 M7 7 L12.8 4" stroke="#3c3f41" stroke-width="1.1" fill="none"/><rect x="11" y="7" width="9" height="12" fill="#3c3f41"/><path d="M15.6 7.6 V14.6" stroke="#1a9fdc" stroke-width="2.2"/><path d="M11.6 13 H19.6 L15.6 18.4 Z" fill="#1a9fdc"/></svg>
<div class="r" style="left:1777.50px;top:45.00px;width:1.00px;height:24.00px;background:#55585a;"></div>
<svg class="r" style="left:1789.00px;top:49.00px;" width="19" height="18" viewBox="0 0 19 18"><circle cx="6.9" cy="6.9" r="5.2" fill="none" stroke="#afb1b3" stroke-width="2.3"/><path d="M10.8 10.8 L15.8 15.6" stroke="#afb1b3" stroke-width="2.7" stroke-linecap="round"/></svg>
<svg class="r" style="left:1820.00px;top:47.40px;" width="20" height="20" viewBox="0 0 20 20"><circle cx="10" cy="10" r="9.8" fill="#ffa40a"/><path d="M10 14.6 V7 M6.8 9.8 L10 6.4 L13.2 9.8" fill="none" stroke="#ffffff" stroke-width="1.9"/></svg>
<svg class="r" style="left:1851.50px;top:47.60px;" width="19.5" height="19.5" viewBox="0 0 19.5 19.5"><rect width="19.5" height="19.5" fill="#d2d2d2"/><circle cx="9.75" cy="7.4" r="3.7" fill="#ffffff"/><path d="M2.6 19.5 V16.5 C2.6 13.6 5 12.2 9.75 12.2 C14.5 12.2 16.9 13.6 16.9 16.5 V19.5 Z" fill="#ffffff"/></svg>
<svg class="r" style="left:1013.00px;top:165.00px;" width="21" height="21" viewBox="0 0 21 21"><path d="M10.4 0.7 L20 7.6 L10.4 14.4 L0.8 7.6 Z" fill="#0a9bd5"/><path d="M0.8 11.6 L10.4 18.6 L20 11.6" fill="none" stroke="#0a9bd5" stroke-width="2.6"/></svg>
<svg class="r" style="left:1029.80px;top:184.10px;" width="6.6" height="3.8" viewBox="0 0 6.6 3.8"><path d="M0 0 H6.6 L3.3 3.8 Z" fill="#d4d4d4"/></svg>
<svg class="r" style="left:1047.50px;top:164.50px;" width="22" height="22" viewBox="0 0 22 22"><g transform="rotate(-38 11 11)"><rect x="6.6" y="3" width="8.8" height="16" rx="1" fill="none" stroke="#afb1b3" stroke-width="1.3"/></g><path d="M13.4 1.4 A10 10 0 0 1 20.8 10.4" fill="none" stroke="#afb1b3" stroke-width="1.2"/><path d="M8.6 20.6 A10 10 0 0 1 1.2 11.6" fill="none" stroke="#afb1b3" stroke-width="1.2"/><path d="M12.4 0 L15.4 1.8 L12.6 3.6 Z" fill="#afb1b3"/><path d="M9.6 22 L6.6 20.2 L9.4 18.4 Z" fill="#afb1b3"/></svg>
<svg class="r" style="left:1065.40px;top:184.10px;" width="6.6" height="3.8" viewBox="0 0 6.6 3.8"><path d="M0 0 H6.6 L3.3 3.8 Z" fill="#d4d4d4"/></svg>
<svg class="r" style="left:1085.00px;top:167.00px;" width="17" height="17" viewBox="0 0 17 17"><circle cx="8.5" cy="8.5" r="7.5" fill="#a2a8b8" stroke="#8f95a6" stroke-width="0.8"/><circle cx="10.5" cy="7.2" r="4.7" fill="#3c3f41"/></svg>
<svg class="r" style="left:1100.30px;top:184.10px;" width="6.6" height="3.8" viewBox="0 0 6.6 3.8"><path d="M0 0 H6.6 L3.3 3.8 Z" fill="#d4d4d4"/></svg>
<svg class="r" style="left:1127.00px;top:167.50px;" width="12" height="16" viewBox="0 0 12 16"><rect x="1.6" y="1.2" width="8.8" height="13.6" rx="1.4" fill="none" stroke="#afb1b3" stroke-width="1.7"/><rect x="2.4" y="11.6" width="7.2" height="3" fill="#afb1b3"/><rect x="4.8" y="12.6" width="2.4" height="1" fill="#3c3f41"/></svg>
<svg class="r" style="left:1206.80px;top:170.20px;" width="15" height="11.1" viewBox="0 0 14 10.4"><path d="M0.4 10 A6.6 6.4 0 0 1 13.6 10 Z" fill="#22e084"/><path d="M3.4 4.4 L1.9 1.4 M10.6 4.4 L12.1 1.4" stroke="#22e084" stroke-width="1.1" stroke-linecap="round"/><circle cx="4.2" cy="7.2" r="0.8" fill="#3c3f41"/><circle cx="9.8" cy="7.2" r="0.8" fill="#3c3f41"/></svg>
<svg class="r" style="left:1273.00px;top:166.20px;" width="19" height="19" viewBox="0 0 19 19"><circle cx="9.4" cy="9.4" r="8.3" fill="none" stroke="#afb1b3" stroke-width="1.3"/><circle cx="9.4" cy="9.4" r="5.3" fill="none" stroke="#afb1b3" stroke-width="1.2"/><path d="M9.4 4.1 A5.3 5.3 0 0 0 9.4 14.7 Z" fill="#afb1b3"/></svg>
<svg class="r" style="left:1420.60px;top:166.60px;" width="18" height="18" viewBox="0 0 20 20"><circle cx="10" cy="10" r="9.2" fill="#afb1b3"/><path d="M3 8 C5 8.6 6.4 9.6 7.8 11 C9 12 9.6 13.4 9 15.2 C8.6 16.6 8 17.4 7.4 18 C4.6 17 2.4 14.6 1.8 11.6 C1.6 10.2 2 9 3 8 Z M8.6 2 C10.6 1.4 13.4 1.6 15.4 3.2 C14.6 4.4 13.6 4.6 12.6 4.8 C11.8 5.8 12.6 6.8 13.8 7 C15.4 7.2 17 8 18 9.6 C18.2 12 17.4 14.4 15.6 16 C14.8 14.8 14.6 13.6 13.6 12.6 C12.4 11.6 10.6 11.4 9.8 10 C9.2 8.8 10 7.6 9.4 6.4 C8.8 5.2 7.4 5 6.8 4 C7.2 3 7.8 2.4 8.6 2 Z" fill="#3c3f41"/></svg>
<svg class="r" style="left:1800.50px;top:167.50px;" width="17" height="16" viewBox="0 0 17 16"><path d="M8.5 0.8 L16.4 15 L0.6 15 Z" fill="#f5a00f"/><rect x="7.6" y="5.4" width="1.9" height="5.2" fill="#2b2b2b"/><rect x="7.6" y="11.6" width="1.9" height="1.9" fill="#2b2b2b"/></svg>
<div class="r" style="left:1801.5px;top:203.3px;width:15px;height:15px;border-radius:50%;background:#0e96cc;"></div>
<span id="t62" class="t" style="left:1805.70px;top:203.30px;font-size:11.50px;line-height:16px;color:#26282a;font-weight:700;">?</span>
<svg class="r" style="left:1014.50px;top:204.00px;" width="18" height="13.5" viewBox="0 0 18 13.5"><path d="M0.4 6.7 C3 2 6 0.6 9 0.6 C12 0.6 15 2 17.6 6.7 C15 11.4 12 12.8 9 12.8 C6 12.8 3 11.4 0.4 6.7 Z" fill="#afb1b3"/><circle cx="9" cy="6.7" r="3.6" fill="#3c3f41"/><circle cx="9" cy="6.7" r="2" fill="#afb1b3"/></svg>
<svg class="r" style="left:1029.80px;top:219.10px;" width="6.6" height="3.8" viewBox="0 0 6.6 3.8"><path d="M0 0 H6.6 L3.3 3.8 Z" fill="#d4d4d4"/></svg>
<svg class="r" style="left:1043.50px;top:201.50px;" width="19" height="19" viewBox="0 0 19 19"><path d="M2 4.6 V9.6 A6.6 6.6 0 0 0 15.2 9.6 V4.6 H11.2 V9.6 A2.6 2.6 0 0 1 6 9.6 V4.6 Z" fill="#afb1b3"/><rect x="2" y="3.2" width="4" height="3" fill="#0a9bd5"/><rect x="11.2" y="1.4" width="4" height="4.4" fill="#0a9bd5"/><path d="M0.6 0.2 L17.6 17.4" stroke="#3c3f41" stroke-width="3"/><path d="M1 0.6 L17.2 17" stroke="#afb1b3" stroke-width="1.3"/></svg>
<svg class="r" style="left:1130.50px;top:201.50px;" width="22" height="19" viewBox="0 0 22 19"><path d="M3.6 15.2 C12.5 15.2 6.5 3.4 15.8 3.4" fill="none" stroke="#afb1b3" stroke-width="1.5"/><circle cx="3.4" cy="15.2" r="2.5" fill="#afb1b3"/><circle cx="15.8" cy="3.4" r="2.5" fill="#afb1b3"/><path d="M13.8 11.4 L19.8 17.4 M19.8 11.4 L13.8 17.4" stroke="#e5473d" stroke-width="1.7"/></svg>
<svg class="r" style="left:1163.50px;top:200.50px;" width="20" height="19" viewBox="0 0 20 19"><path d="M1.6 16.6 L12.4 6 L14.6 8.2 L3.8 18.8 Z" fill="#afb1b3"/><path d="M10.6 7.6 L12.8 9.8" stroke="#3c3f41" stroke-width="0.9"/><path d="M6.6 2.6 L8.4 4.6 M11.6 0.8 L11.8 3.2 M16.4 1.6 L14.8 3.6 M16.2 7 L18.6 7.2 M15.2 10.2 L16.8 12.2" stroke="#0a9bd5" stroke-width="1.5"/></svg>
<svg class="r" style="left:1200.50px;top:201.50px;" width="20" height="19" viewBox="0 0 20 19"><path d="M4 0.8 V4.6 M1.2 3.4 L4 6.6 L6.8 3.4 Z" stroke="#afb1b3" stroke-width="2" fill="#afb1b3"/><path d="M4 17.4 V13.6 M1.2 14.8 L4 11.6 L6.8 14.8 Z" stroke="#afb1b3" stroke-width="2" fill="#afb1b3"/><rect x="10.4" y="1.2" width="8" height="3.4" fill="none" stroke="#afb1b3" stroke-width="1.2"/><rect x="10.4" y="7.4" width="8" height="3.4" fill="none" stroke="#afb1b3" stroke-width="1.2"/><rect x="10.4" y="13.6" width="8" height="3.4" fill="none" stroke="#afb1b3" stroke-width="1.2"/></svg>
<svg class="r" style="left:1217.10px;top:219.30px;" width="6.6" height="3.8" viewBox="0 0 6.6 3.8"><path d="M0 0 H6.6 L3.3 3.8 Z" fill="#d4d4d4"/></svg>
<svg class="r" style="left:1228.50px;top:201.50px;" width="19" height="19" viewBox="0 0 19 19"><rect x="0.4" y="0.5" width="1.4" height="17.4" fill="#0a9bd5"/><rect x="4" y="3.4" width="8.6" height="4.4" fill="#afb1b3"/><rect x="4" y="10.6" width="13.6" height="4.4" fill="#afb1b3"/></svg>
<svg class="r" style="left:1244.00px;top:219.30px;" width="6.6" height="3.8" viewBox="0 0 6.6 3.8"><path d="M0 0 H6.6 L3.3 3.8 Z" fill="#d4d4d4"/></svg>
<svg class="r" style="left:1258.50px;top:201.50px;" width="12" height="19" viewBox="0 0 12 19"><rect x="0.5" y="0.9" width="10" height="2.3" fill="#afb1b3"/><rect x="0.5" y="15.5" width="10" height="2.3" fill="#afb1b3"/><rect x="4.5" y="4.6" width="2.2" height="2.6" fill="#afb1b3"/><rect x="4.5" y="8.2" width="2.2" height="2.6" fill="#afb1b3"/><rect x="4.5" y="11.8" width="2.2" height="2.6" fill="#afb1b3"/></svg>
<svg class="r" style="left:1270.70px;top:219.30px;" width="6.6" height="3.8" viewBox="0 0 6.6 3.8"><path d="M0 0 H6.6 L3.3 3.8 Z" fill="#d4d4d4"/></svg>
<svg class="r" style="left:1643.00px;top:133.50px;" width="16" height="16" viewBox="0 0 16 16"><path d="M0.6 2 H15.4 M0.6 6 H15.4 M0.6 10 H15.4 M0.6 14 H15.4" stroke="#afb1b3" stroke-width="1.5"/></svg>
<svg class="r" style="left:1712.50px;top:133.50px;" width="16" height="16" viewBox="0 0 16 16"><path d="M0.6 2 H5.6 M0.6 6 H5.6 M0.6 10 H5.6 M0.6 14 H5.6" stroke="#9fb4cc" stroke-width="1.5"/><rect x="7.4" y="1.2" width="7.8" height="13.6" fill="#9fb4cc"/></svg>
<svg class="r" style="left:1774.50px;top:133.50px;" width="16" height="16" viewBox="0 0 16 16"><rect x="0.5" y="1" width="15" height="14" fill="#afb1b3"/><path d="M2.4 12.6 L6.2 7.2 L8.8 10.2 L10.6 8.6 L13.6 12.6 Z" fill="#3c3f41"/></svg>
<svg class="r" style="left:435.80px;top:48.60px;" width="18.4" height="18.8" viewBox="0 0 18.4 18.8"><path d="M8.6 0.2 H14.4 V8.4 H2.2 V6.6 H7.2 V0.2 Z" fill="#9aa7c7"/><path d="M2.6 5 L7 0.4 V5 Z" fill="#9aa7c7"/><rect x="0" y="10" width="18.2" height="8.6" fill="#e25f14"/><path d="M5.6 11.6 L2.8 14.3 L5.6 17 M8.6 11.6 L11.4 14.3 L8.6 17" fill="none" stroke="#3c3f41" stroke-width="1.2"/></svg>
<svg class="r" style="left:76.80px;top:91.10px;" width="18.4" height="18.8" viewBox="0 0 18.4 18.8"><path d="M8.6 0.2 H14.4 V8.4 H2.2 V6.6 H7.2 V0.2 Z" fill="#9aa7c7"/><path d="M2.6 5 L7 0.4 V5 Z" fill="#9aa7c7"/><rect x="0" y="10" width="18.2" height="8.6" fill="#e25f14"/><path d="M5.6 11.6 L2.8 14.3 L5.6 17 M8.6 11.6 L11.4 14.3 L8.6 17" fill="none" stroke="#3c3f41" stroke-width="1.2"/></svg>
<svg class="r" style="left:46.00px;top:136.20px;" width="14.2" height="11.4" viewBox="0 0 14.2 11.4"><path d="M0.1 0.1 H5.8 L7 2.8 H14 V11.2 H0.1 Z" fill="#afb1b3"/></svg>
<svg class="r" style="left:46.00px;top:300.50px;" width="15" height="14" viewBox="0 0 15 14"><path d="M7.2 0.4 L11 6.3 H3.4 Z" fill="#afb1b3"/><rect x="0.1" y="7.4" width="6.3" height="6.2" fill="#afb1b3"/><circle cx="10.9" cy="10.5" r="3.2" fill="#afb1b3"/></svg>
<svg class="r" style="left:47.00px;top:858.50px;" width="12.5" height="12" viewBox="0 0 12.5 12"><rect x="6.8" y="0.3" width="5.1" height="4.6" fill="#afb1b3"/><rect x="0.4" y="6.4" width="5.3" height="5.2" fill="#afb1b3"/><rect x="6.8" y="6.4" width="5.1" height="5.2" fill="#afb1b3"/></svg>
<svg class="r" style="left:44.00px;top:957.50px;" width="18" height="18" viewBox="0 0 18 18"><path d="M9.00 1.20 L11.06 6.77 L16.99 7.00 L12.33 10.68 L13.94 16.40 L9.00 13.10 L4.06 16.40 L5.67 10.68 L1.01 7.00 L6.94 6.77 Z" fill="#afb1b3"/></svg>
<svg class="r" style="left:46.00px;top:1091.60px;" width="14" height="10.36" viewBox="0 0 14 10.4"><path d="M0.4 10 A6.6 6.4 0 0 1 13.6 10 Z" fill="#afb1b3"/><path d="M3.4 4.4 L1.9 1.4 M10.6 4.4 L12.1 1.4" stroke="#afb1b3" stroke-width="1.1" stroke-linecap="round"/><circle cx="4.2" cy="7.2" r="0.8" fill="#afb1b3"/><circle cx="9.8" cy="7.2" r="0.8" fill="#afb1b3"/></svg>
<svg class="r" style="left:1857.80px;top:87.80px;" width="19" height="15.2" viewBox="0 0 19 15.2"><path d="M0.6 11.6 C0.2 6 3.4 2.6 8 2.6 C9.6 2.6 10.6 3 11.6 3.6 C12 1.6 13.6 0.4 15.4 0.6 C17.6 0.8 18.6 3 17.6 4.8 C16.8 6 15.2 6.2 14.4 5.4 L15.2 4.4 C15.8 4.8 16.4 4.6 16.6 4 C16.8 3 16 2.2 15.2 2.2 C14 2.2 13.4 3.4 13.4 4.6 C13.6 6.6 14.2 7.6 14.2 9 V11.6 H11.4 V9.8 C10.8 9 9.6 9 9 9.8 V11.6 H6 V9.8 C5.4 9 4.2 9 3.6 9.8 V11.6 Z" fill="#afb1b3"/></svg>
<svg class="r" style="left:1859.50px;top:174.80px;" width="15" height="17" viewBox="0 0 15 17"><path d="M3.4 10.6 H1 V2.2 A1.4 1.4 0 0 1 2.4 0.8 H11" fill="none" stroke="#afb1b3" stroke-width="1.5"/><path d="M0.2 12.4 H4.6" stroke="#afb1b3" stroke-width="1.5"/><rect x="6" y="3.4" width="7.8" height="12.4" rx="1.4" fill="none" stroke="#afb1b3" stroke-width="1.6"/><rect x="6.6" y="12.4" width="6.6" height="3" fill="#afb1b3"/></svg>
<svg class="r" style="left:1860.50px;top:858.00px;" width="15.5" height="17.5" viewBox="0 0 15.5 17.5"><path d="M4.4 10.8 H1 V2 A1.2 1.2 0 0 1 2.2 0.8 H9.6 V4" fill="none" stroke="#afb1b3" stroke-width="1.5"/><path d="M6.4 6.2 V13.6 M9 7 V13.6" stroke="#afb1b3" stroke-width="1.3"/><circle cx="12.2" cy="14.4" r="2.4" fill="#3a78c9"/></svg>
<svg class="r" style="left:1860.50px;top:963.00px;" width="12.5" height="17" viewBox="0 0 12.5 17"><rect x="1" y="1" width="10.2" height="14.6" rx="1.2" fill="none" stroke="#afb1b3" stroke-width="1.5"/><rect x="1.6" y="11.8" width="9" height="3.2" fill="#afb1b3"/><rect x="4.6" y="12.9" width="3" height="1" fill="#3c3f41"/></svg>
<svg class="r" style="left:1834.50px;top:172.50px;" width="14" height="14.5" viewBox="0 0 14 14.5"><path d="M0.3 2.2 H13.5 M0.3 7.1 H13.5 M0.3 12 H13.5" stroke="#d8d8d8" stroke-width="1.1"/><circle cx="9" cy="2.2" r="1.7" fill="#d8d8d8"/><circle cx="4.4" cy="7.1" r="1.7" fill="#d8d8d8"/><circle cx="6.8" cy="12" r="1.7" fill="#d8d8d8"/></svg>
<svg class="r" style="left:988.00px;top:221.00px;" width="13.5" height="14.5" viewBox="0 0 13.5 14.5"><rect x="0.2" y="8.8" width="13" height="5.2" fill="#d0d0d0"/><circle cx="10.6" cy="11.4" r="1.1" fill="#2b2d2f"/><path d="M0.6 7.6 L1 3 L3.6 3.4 L4.4 7.6 Z M5.4 7.6 L5.6 1.6 L8.6 0.6 L8 7.6 Z M9.2 7.6 L11.2 0.4 L13.4 2.6 L11.6 7.6 Z" fill="#d0d0d0"/></svg>
<svg class="r" style="left:987.30px;top:1063.00px;" width="14" height="14" viewBox="0 0 20 20"><circle cx="10" cy="10" r="9.2" fill="#c4c4c4"/><path d="M3 8 C5 8.6 6.4 9.6 7.8 11 C9 12 9.6 13.4 9 15.2 C8.6 16.6 8 17.4 7.4 18 C4.6 17 2.4 14.6 1.8 11.6 C1.6 10.2 2 9 3 8 Z M8.6 2 C10.6 1.4 13.4 1.6 15.4 3.2 C14.6 4.4 13.6 4.6 12.6 4.8 C11.8 5.8 12.6 6.8 13.8 7 C15.4 7.2 17 8 18 9.6 C18.2 12 17.4 14.4 15.6 16 C14.8 14.8 14.6 13.6 13.6 12.6 C12.4 11.6 10.6 11.4 9.8 10 C9.2 8.8 10 7.6 9.4 6.4 C8.8 5.2 7.4 5 6.8 4 C7.2 3 7.8 2.4 8.6 2 Z" fill="#2b2d2f"/></svg>
<svg class="r" style="left:138.90px;top:187.10px;" width="11" height="14" viewBox="0 0 11 14"><path d="M0.7 0.7 H10.3 V9.6 L5.5 13.6 L0.7 9.6 Z" fill="#2b2b2b" stroke="#5f6467" stroke-width="1.3"/><path d="M2.8 5.6 H8.2" stroke="#5f6467" stroke-width="1.3"/></svg>
<svg class="r" style="left:138.90px;top:588.40px;" width="11" height="14" viewBox="0 0 11 14"><path d="M0.7 0.7 H10.3 V9.6 L5.5 13.6 L0.7 9.6 Z" fill="#2b2b2b" stroke="#5f6467" stroke-width="1.3"/><path d="M2.8 5.6 H8.2" stroke="#5f6467" stroke-width="1.3"/></svg>
<svg class="r" style="left:138.90px;top:745.30px;" width="11" height="14" viewBox="0 0 11 14"><path d="M0.7 13.3 H10.3 V4.4 L5.5 0.4 L0.7 4.4 Z" fill="#2b2b2b" stroke="#5f6467" stroke-width="1.3"/><path d="M2.8 8.6 H8.2" stroke="#5f6467" stroke-width="1.3"/></svg>
<svg class="r" style="left:138.90px;top:775.00px;" width="11" height="14" viewBox="0 0 11 14"><path d="M0.7 0.7 H10.3 V9.6 L5.5 13.6 L0.7 9.6 Z" fill="#2b2b2b" stroke="#5f6467" stroke-width="1.3"/><path d="M2.8 5.6 H8.2" stroke="#5f6467" stroke-width="1.3"/></svg>
<svg class="r" style="left:138.90px;top:986.30px;" width="11" height="14" viewBox="0 0 11 14"><path d="M0.7 13.3 H10.3 V4.4 L5.5 0.4 L0.7 4.4 Z" fill="#2b2b2b" stroke="#5f6467" stroke-width="1.3"/><path d="M2.8 8.6 H8.2" stroke="#5f6467" stroke-width="1.3"/></svg>
<svg class="r" style="left:138.90px;top:1012.90px;" width="11" height="14" viewBox="0 0 11 14"><path d="M0.7 13.3 H10.3 V4.4 L5.5 0.4 L0.7 4.4 Z" fill="#2b2b2b" stroke="#5f6467" stroke-width="1.3"/><path d="M2.8 8.6 H8.2" stroke="#5f6467" stroke-width="1.3"/></svg>
<svg class="r" style="left:162.00px;top:178.00px;" width="15" height="19" viewBox="0 0 15 19"><path d="M7.4 0.7 A6.5 6.5 0 0 1 11.2 12.4 V13.4 H3.6 V12.4 A6.5 6.5 0 0 1 7.4 0.7 Z" fill="#ffa800"/><rect x="3.9" y="14.4" width="7" height="1.5" fill="#9aa0a4"/><rect x="4.4" y="17" width="6" height="1.3" fill="#d8d8d8"/></svg>
<svg class="r" style="left:108.00px;top:718.00px;" width="16" height="16.5" viewBox="0 0 16 16.5"><circle cx="7.9" cy="4.6" r="3.3" fill="none" stroke="#d0d0d0" stroke-width="1.6"/><path d="M1 15.3 C1 10 14.8 10 14.8 15.3 Z" fill="none" stroke="#d0d0d0" stroke-width="1.6"/></svg>
<svg class="r" style="left:109.50px;top:933.50px;" width="13.5" height="14.5" viewBox="0 0 13.5 14.5"><rect x="1" y="5.2" width="11.2" height="8.2" rx="1" fill="none" stroke="#d0d0d0" stroke-width="1.5"/><path d="M3.4 5 V3.6 A3.2 3.2 0 0 1 9.8 3.6 V5" fill="none" stroke="#d0d0d0" stroke-width="1.5"/><circle cx="6.6" cy="9.3" r="1.1" fill="#d0d0d0"/></svg>
<svg class="r" style="left:1195.00px;top:405.00px;" width="75" height="75" viewBox="0 0 1230 1230"><path d="M615 210 L985 440 Q975 830 615 1068 Q255 830 248 440 Z" fill="#2768ff"/><path d="M615 298 L908 478 Q895 800 615 985 Q335 800 322 478 Z" fill="#ffffff"/><path d="M550 408 L615 527 L680 408 L845 515 Q835 770 615 900 Q395 770 395 515 Z" fill="#2768ff"/><path d="M615 527 L690 665 L615 785 L540 665 Z" fill="#ffffff"/></svg>
<svg class="r" style="left:79.00px;top:1128.00px;" width="14" height="14" viewBox="0 0 14 14"><path d="M0.4 0.4 L9.8 5.8 L0.4 11.4 Z" fill="#afb1b3"/><circle cx="11.3" cy="11.4" r="2" fill="#3a78c9"/></svg>
<svg class="r" style="left:145.50px;top:1128.50px;" width="13" height="11" viewBox="0 0 13 11"><path d="M0.3 1.4 H2.6 M0.3 5.3 H2.6 M0.3 9.2 H2.6" stroke="#afb1b3" stroke-width="2"/><path d="M4.2 1.4 H12.6 M4.2 5.3 H12.6 M4.2 9.2 H12.6" stroke="#afb1b3" stroke-width="2"/></svg>
<svg class="r" style="left:227.50px;top:1127.00px;" width="14" height="14" viewBox="0 0 14 14"><circle cx="6.7" cy="6.7" r="6.5" fill="#afb1b3"/><rect x="5.8" y="3" width="1.9" height="4.8" fill="#3c3f41"/><rect x="5.8" y="8.8" width="1.9" height="1.9" fill="#3c3f41"/></svg>
<svg class="r" style="left:332.00px;top:1127.60px;" width="14" height="12.2" viewBox="0 0 14 12.2"><rect x="0" y="0" width="13.8" height="12" fill="#afb1b3"/><path d="M2.4 2.8 L5.6 5.8 L2.4 8.8" fill="none" stroke="#3c3f41" stroke-width="1.4"/><path d="M6.6 9.2 H11" stroke="#3c3f41" stroke-width="1.4"/></svg>
<svg class="r" style="left:429.30px;top:1130.00px;" width="14" height="10" viewBox="0 0 14 10"><path d="M0 1.2 H13.6 M0 5 H8.6 M0 8.8 H11.6" stroke="#afb1b3" stroke-width="1.9"/></svg>
<svg class="r" style="left:515.50px;top:1126.50px;" width="16" height="15" viewBox="0 0 16 15"><g transform="rotate(-42 8 7.5)"><rect x="1.8" y="1.6" width="10.6" height="3.6" fill="#afb1b3"/><path d="M1.8 1.6 L0.2 3.4 L1.8 5.2 Z" fill="#afb1b3"/><rect x="6.4" y="5.2" width="2.8" height="10.4" fill="#afb1b3"/></g></svg>
<svg class="r" style="left:591.00px;top:1129.40px;" width="16.5" height="10.6" viewBox="0 0 16.5 10.6"><path d="M1.6 10 A6.6 6.6 0 0 1 10.2 2.2" fill="none" stroke="#afb1b3" stroke-width="2.2"/><path d="M11.8 2.9 A6.6 6.6 0 0 1 14.9 10" fill="none" stroke="#afb1b3" stroke-width="2.2"/><path d="M6.6 10.2 L10.9 2.8 L9.2 10.4 Z" fill="#afb1b3"/></svg>
<svg class="r" style="left:683.50px;top:1127.20px;" width="14.5" height="15" viewBox="0 0 14.5 15"><path d="M3.4 0.6 H10.6 L11.6 3 H12.6 V5.6 H13.8 V9.6 H12.6 V11.2 H10.4 V13 H11.6 V14.6 H2.6 V13 H3.8 V11.2 H1.6 V9.6 H0.4 V5.6 H1.6 V3 H2.6 Z" fill="#afb1b3"/></svg>
<svg class="r" style="left:1605.50px;top:1126.00px;" width="17.5" height="17" viewBox="0 0 17.5 17"><path d="M8.4 0.9 A7.5 7.5 0 1 0 8.4 15.9 H15.9 V8.4 A7.5 7.5 0 0 0 8.4 0.9 Z" fill="none" stroke="#afb1b3" stroke-width="1.5"/></svg>
<svg class="r" style="left:1714.50px;top:1126.00px;" width="17" height="15.5" viewBox="0 0 17 15.5"><path d="M0.6 4.6 V0.7 H12.8 V2.2" fill="none" stroke="#afb1b3" stroke-width="1.3"/><path d="M5 10.6 H3.2 V3.4 H14.4 V4.6" fill="none" stroke="#afb1b3" stroke-width="1.3"/><circle cx="10.2" cy="9.4" r="3.1" fill="none" stroke="#afb1b3" stroke-width="1.4"/><path d="M12.4 11.8 L15.6 14.8" stroke="#afb1b3" stroke-width="1.6"/></svg>
<svg class="r" style="left:46.50px;top:1159.50px;" width="16" height="16" viewBox="0 0 16 16"><rect x="3.6" y="0.7" width="11.4" height="11.4" fill="none" stroke="#afb1b3" stroke-width="1.3"/><path d="M0.8 3.6 V14.9 H12" fill="none" stroke="#afb1b3" stroke-width="1.3"/></svg>
<svg class="r" style="left:1685.00px;top:1160.50px;" width="16" height="13.5" viewBox="0 0 16 13.5"><rect x="5" y="5.8" width="10.2" height="7.4" fill="#c4c4c4"/><path d="M1.4 6.4 V3.8 A2.9 2.9 0 0 1 7.2 3.8 V6" fill="none" stroke="#c4c4c4" stroke-width="1.6"/></svg>
<svg class="r" style="left:1716.00px;top:1160.00px;" width="16" height="16" viewBox="0 0 16 16"><circle cx="7.9" cy="7.8" r="7.4" fill="#e0443e"/><rect x="6.9" y="3.4" width="2.1" height="5.4" rx="0.6" fill="#ffffff"/><circle cx="7.95" cy="11.4" r="1.25" fill="#ffffff"/></svg>
<svg class="r" style="left:1744.00px;top:1159.00px;" width="18" height="18" viewBox="0 0 18 18"><circle cx="9" cy="8.8" r="8.4" fill="#c9c9c9"/><ellipse cx="6.2" cy="6.6" rx="1" ry="1.6" fill="#26282a"/><ellipse cx="11.8" cy="6.6" rx="1" ry="1.6" fill="#26282a"/><path d="M4.6 10.6 Q9 15.2 13.4 10.6" fill="none" stroke="#26282a" stroke-width="1.4"/></svg>
<svg class="r" style="left:1773.20px;top:1159.00px;" width="18" height="18" viewBox="0 0 18 18"><circle cx="9" cy="8.8" r="8.4" fill="#c9c9c9"/><ellipse cx="6.2" cy="6.6" rx="1" ry="1.6" fill="#26282a"/><ellipse cx="11.8" cy="6.6" rx="1" ry="1.6" fill="#26282a"/><path d="M4.8 13.2 Q9 9 13.2 13.2" fill="none" stroke="#26282a" stroke-width="1.4"/></svg>
</div></body></html>
